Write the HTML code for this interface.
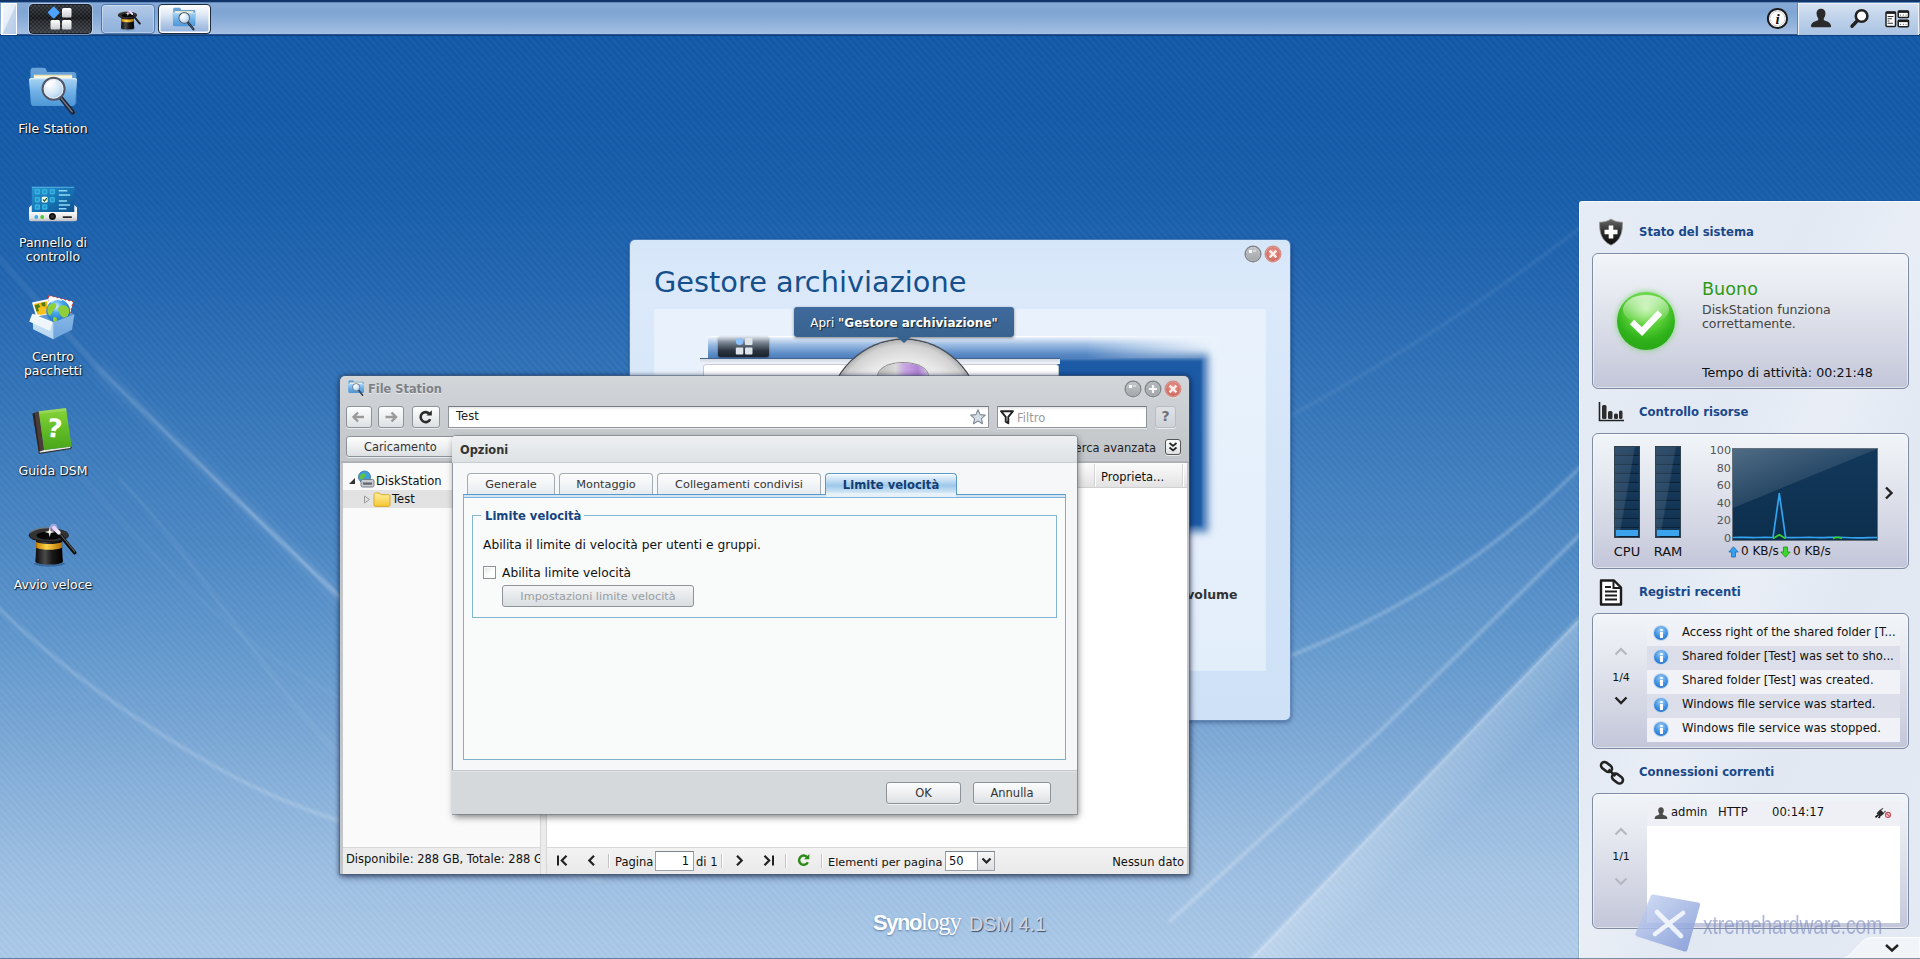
<!DOCTYPE html>
<html lang="it">
<head>
<meta charset="utf-8">
<title>Synology DiskStation - DSM 4.1</title>
<style>
*{box-sizing:border-box;margin:0;padding:0}
html,body{width:1920px;height:959px;overflow:hidden}
body{position:relative;font-family:"DejaVu Sans","Liberation Sans",sans-serif;font-size:11.5px;color:#111;
 background:#1259a7}
.abs{position:absolute}
#bg{position:absolute;left:0;top:0;width:1920px;height:959px;
 background:linear-gradient(180deg,#1158a7 0px,#135aa8 120px,#175eab 200px,#2568b2 300px,#3777ba 420px,#4b87c4 540px,#6097cd 640px,#78a6d5 730px,#8eb5dd 810px,#a0c1e4 885px,#abc9e8 959px)}
#stripes{position:absolute;left:0;top:0;width:1920px;height:959px;
 background:repeating-linear-gradient(48deg,rgba(255,255,255,0.026) 0px,rgba(255,255,255,0.026) 1.4px,rgba(0,0,0,0.014) 2.6px,rgba(0,0,0,0.014) 3.8px,rgba(255,255,255,0.026) 5.0px)}
/* ---------- taskbar ---------- */
#taskbar{position:absolute;left:0;top:0;width:1920px;height:36px;
 background:linear-gradient(180deg,#0f2f60 0px,#12386f 1.8px,#6d93c4 2.6px,#86aad7 3.4px,#7fa5d4 12px,#91b2dc 24px,#a4bfe2 33.5px,#35609b 34.3px,#0e3670 35.2px,#0f4a91 36px)}
.dlabel{position:absolute;left:-7px;width:120px;text-align:center;color:#fff;font-size:12.5px;line-height:14px;text-shadow:1px 1px 1px rgba(0,0,0,.85),0 0 2px rgba(0,0,0,.5)}
.wbtn{position:absolute;width:14px;height:14px;border-radius:50%;margin:1px}
.wbtn svg{position:absolute;left:-1px;top:-1px}
.wmin{background:linear-gradient(180deg,#c4c7ca 0%,#b4b7ba 45%,#a4a8ab 100%);box-shadow:0 0 0 1.5px #80858a,0 1px 1px 1px rgba(255,255,255,.5)}
.wmin:before{content:"";position:absolute;left:3px;top:3px;width:3px;height:3px;background:#fff;opacity:.95}
.wmin:after{content:"";position:absolute;left:7px;top:3px;width:3px;height:2px;background:#d9dbdd;opacity:.8}
.wmax{background:linear-gradient(180deg,#b5b8bb 0%,#a5a8ab 100%);box-shadow:0 0 0 1.5px #80858a,0 1px 1px 1px rgba(255,255,255,.5)}
.wclose{background:radial-gradient(circle at 50% 40%,#e9a096 0,#db7c72 5px,#cf675d 8px);box-shadow:0 0 0 1.5px #d58d85,0 1px 1px 1px rgba(255,255,255,.5)}

.tbtn{position:absolute;border:1px solid #8e9399;border-radius:3px;background:linear-gradient(180deg,#fdfdfd 0%,#eef0f1 50%,#dde0e3 100%);box-shadow:0 1px 0 rgba(255,255,255,.6)}
.tbtn svg{position:absolute;left:0;top:0}
.fld{background:linear-gradient(180deg,#e6e6e6 0,#fff 3px);border:1px solid #8f959b;border-top-color:#767c83;box-shadow:0 1px 0 rgba(255,255,255,.6);white-space:nowrap}
.psep{position:absolute;top:6px;width:1px;height:14px;background:#c4c4c4;box-shadow:1px 0 0 #fff}
.tab{position:absolute;top:37px;height:22px;border:1px solid #a3abb3;border-bottom:none;border-radius:4px 4px 0 0;background:linear-gradient(180deg,#fbfcfc 0%,#f1f4f6 55%,#e4eaf0 100%);font-size:11.300px;line-height:22px;text-align:center;color:#333;white-space:nowrap;box-shadow:inset 0 1px 0 #fff}
.tab.act{border-color:#5b9ac6;background:linear-gradient(180deg,#f4f9fd 0%,#cfe4f5 25%,#9cc8ea 55%,#c4def3 80%,#e8f2fa 100%);color:#123c72;font-weight:700;font-size:11.600px}
.wtitle{position:absolute;left:59px;font-size:11.650px;font-weight:700;line-height:16px;color:#19488a;white-space:nowrap}
.wbox{position:absolute;left:12px;width:317px;height:136px;border:1px solid #7f8ba3;border-radius:6px;background:linear-gradient(180deg,#f1f4f8 0%,#e6e9f0 30%,#d3d6e3 70%,#c3c6d9 100%);box-shadow:inset 0 0 0 1px rgba(255,255,255,.5)}
.meter{position:absolute;top:12px;width:26px;height:92px;border:1px solid #33424f;background:repeating-linear-gradient(180deg,#16395a 0,#133352 8px,#0a2238 8px,#0a2238 9px);}
.meter:before{content:"";position:absolute;left:0;top:0;width:24px;height:90px;background:linear-gradient(100deg,rgba(255,255,255,.13) 0%,rgba(255,255,255,.10) 48%,rgba(255,255,255,0) 52%)}
.meter i{position:absolute;left:1px;bottom:1px;width:22px;height:6px;background:#3aa3ec}
.ylab{left:98px;width:40px;text-align:right;font-size:11.200px;line-height:12px;color:#555}
.lrow{position:absolute;left:54px;width:253px;height:24px;font-size:11.600px;line-height:20px;color:#111;white-space:nowrap;padding-left:35px;overflow:hidden}
.inf{position:absolute;left:7px;top:4px;width:14px;height:14px;border-radius:50%;background:radial-gradient(circle at 50% 30%,#9fd0f7 0,#3a8ee0 55%,#1f6cc4 100%);box-shadow:0 0 0 1px #c5d8ee}
.inf:before{content:"";position:absolute;left:6px;top:6px;width:2.500px;height:5.500px;background:#fff}
.inf:after{content:"";position:absolute;left:5.800px;top:2.500px;width:2.800px;height:2.500px;border-radius:50%;background:#fff}
</style>
</head>
<body>
<div id="bg"></div>
<svg id="streaks" class="abs" style="left:0;top:0" width="1920" height="959" viewBox="0 0 1920 959">
 <defs><filter id="bl1" x="-5%" y="-5%" width="110%" height="110%"><feGaussianBlur stdDeviation="1.600"/></filter><linearGradient id="gL1" gradientUnits="userSpaceOnUse" x1="0" y1="250" x2="260" y2="520"><stop offset="0" stop-color="#fff" stop-opacity=".07"/><stop offset=".45" stop-color="#fff" stop-opacity=".16"/><stop offset="1" stop-color="#fff" stop-opacity=".34"/></linearGradient><filter id="bl2" x="-5%" y="-5%" width="110%" height="110%"><feGaussianBlur stdDeviation="5"/></filter></defs>
 <g fill="none" stroke="#fff" stroke-linecap="round">
  <path d="M-10 248L100 370 230 493 345 602 620 850" stroke="url(#gL1)" stroke-width="3" filter="url(#bl1)"/>
  <path d="M100 370L230 493 345 602 620 850" stroke-opacity=".07" stroke-width="12" filter="url(#bl2)"/>
  <path d="M-10 600C60 668 140 725 225 772S420 850 600 880" stroke-opacity=".22" stroke-width="3" filter="url(#bl1)"/>
  <path d="M120 480C200 560 270 690 345 760" stroke-opacity=".09" stroke-width="2.500" filter="url(#bl1)"/>
  <path d="M40 430C120 520 220 640 345 700" stroke-opacity=".06" stroke-width="2" filter="url(#bl1)"/>
  <path d="M1290 656C1400 612 1500 550 1585 462" stroke-opacity=".26" stroke-width="3" filter="url(#bl1)"/>
  <path d="M1170 921L1380 731 1585 530" stroke-opacity=".26" stroke-width="3.500" filter="url(#bl1)"/>
  <path d="M1245 965L1585 613" stroke-opacity=".22" stroke-width="4" filter="url(#bl1)"/>
  <path d="M1290 416C1400 356 1500 290 1585 224" stroke-opacity=".09" stroke-width="2.500" filter="url(#bl1)"/>
  
 </g>
 <linearGradient id="gStreak" gradientUnits="userSpaceOnUse" x1="1400" y1="804.600" x2="1436" y2="839.300"><stop offset="0" stop-color="#fff" stop-opacity=".26"/><stop offset="1" stop-color="#fff" stop-opacity=".09"/></linearGradient>
 <path d="M1245 965L1585 613V965z" fill="url(#gStreak)"/>
 <path d="M1190 908L1585 532V462C1500 550 1400 612 1290 656L1190 700z" fill="#fff" fill-opacity=".03"/>
</svg>
<div id="stripes"></div>
<div id="taskbar"></div>
<!--DESKTOP-->
<!-- taskbar items -->
<div class="abs" style="left:1px;top:3px;width:16px;height:32px;border:1px solid #fff;border-left:2px solid #fff;background:linear-gradient(115deg,#f2f6fb 0%,#e4edf8 48%,#c3d5ec 52%,#b4cbe8 100%)"></div>
<div class="abs" id="mainbtn" style="left:29px;top:4px;width:63px;height:30px;border-radius:4px;border:1px solid #1a1f28;box-shadow:0 0 0 1px rgba(255,255,255,.35);background:linear-gradient(180deg,#2c3035 0%,#121417 48%,#1e2125 54%,#363a40 100%)">
 <svg class="abs" style="left:0;top:0" width="61" height="28" viewBox="0 0 61 28">
  <defs><pattern id="chk" width="4" height="4" patternUnits="userSpaceOnUse"><rect width="2" height="2" fill="rgba(255,255,255,.10)"/><rect x="2" y="2" width="2" height="2" fill="rgba(255,255,255,.10)"/></pattern>
  <linearGradient id="sq" x1="0" y1="0" x2="0" y2="1"><stop offset="0" stop-color="#ffffff"/><stop offset="1" stop-color="#c9ccd1"/></linearGradient></defs>
  <rect width="61" height="28" fill="url(#chk)"/>
  <rect x="19.2" y="3" width="9" height="9" rx="1.2" fill="#4da3ff" transform="rotate(45 23.7 7.5)"/>
  <rect x="32" y="3" width="9.5" height="9.5" rx="1.5" fill="url(#sq)"/>
  <rect x="20.5" y="15" width="9.5" height="9.5" rx="1.5" fill="url(#sq)"/>
  <rect x="32" y="15" width="9.5" height="9.5" rx="1.5" fill="url(#sq)"/>
 </svg>
</div>
<div class="abs" style="left:101px;top:4px;width:54px;height:30px;border-radius:4px;border:1px solid #4f78ad;box-shadow:inset 0 0 0 1px rgba(255,255,255,.35);background:linear-gradient(180deg,#b4cbe8 0%,#9dbbe0 50%,#8fb0da 100%)">
 <svg class="abs" style="left:14px;top:2px" width="26" height="24" viewBox="0 0 52 48"><use href="#hat"/></svg>
</div>
<div class="abs" style="left:158px;top:4px;width:53px;height:30px;border-radius:4px;border:1px solid #1d2a40;box-shadow:inset 0 0 0 1.5px #fff;background:linear-gradient(180deg,#ffffff 0%,#dfe8f5 35%,#a9c2e3 75%,#93b2dc 100%)">
 <svg class="abs" style="left:12px;top:1px" width="26" height="26" viewBox="0 0 48 48"><use href="#fsicon"/></svg>
</div>
<!-- right tray -->
<div class="abs" style="left:1798px;top:3px;width:121px;height:32px;border-top:1px solid #eef3fa;border-left:1px solid #eef3fa;border-right:1px solid #eef3fa;box-shadow:-1px 0 0 #5f86b8;background:linear-gradient(180deg,#d6e2f2 0%,#bfd2ea 45%,#a9c3e3 100%)"></div>
<svg class="abs" style="left:1766px;top:7px" width="23" height="23" viewBox="0 0 23 23">
 <circle cx="11.5" cy="11.5" r="9.6" fill="#fff" stroke="#1c1c1c" stroke-width="2"/>
 <circle cx="11.5" cy="11.5" r="7.4" fill="none" stroke="#bfc6cf" stroke-width=".8"/>
 <text x="11.6" y="17" font-family="Liberation Serif,serif" font-style="italic" font-weight="700" font-size="15" text-anchor="middle" fill="#111">i</text>
</svg>
<svg class="abs" style="left:1810px;top:8px" width="22" height="21" viewBox="0 0 22 21">
 <path d="M11 .8c3 0 4.6 2.2 4.4 5.2-.2 2.4-1.100 3.600-1.700 4.400-.3 1.300.4 1.800 1.700 2.300 2.600 1 5.200 1.900 5.700 5.300.1.800-.3 1.200-1 1.200H1.900c-.7 0-1.100-.4-1-1.200.5-3.400 3.100-4.300 5.700-5.300 1.300-.5 2-1 1.700-2.300-.6-.8-1.500-2-1.700-4.400C6.400 3 8 .8 11 .8z" fill="#2a2a2a"/>
</svg>
<svg class="abs" style="left:1848px;top:8px" width="22" height="22" viewBox="0 0 22 22">
 <circle cx="13.600" cy="8" r="5.800" fill="#fff" stroke="#222" stroke-width="2.600"/>
 <path d="M9.300 12.700L4 18.200" stroke="#222" stroke-width="3.400" stroke-linecap="round"/>
</svg>
<svg class="abs" style="left:1885px;top:10px" width="25" height="19" viewBox="0 0 25 19">
 <rect x="1" y="2" width="9.500" height="14.500" rx="1" fill="#fff" stroke="#1c1c1c" stroke-width="1.500"/><path d="M1 2.800h9.500" stroke="#1c1c1c" stroke-width="2.200"/>
 <rect x="13.200" y="1" width="10.300" height="6.500" rx="1" fill="#fff" stroke="#1c1c1c" stroke-width="1.500"/><path d="M13.200 1.800h10.300" stroke="#1c1c1c" stroke-width="2.200"/>
 <rect x="13.200" y="10.200" width="10.300" height="6.500" rx="1" fill="#fff" stroke="#1c1c1c" stroke-width="1.500"/><path d="M13.200 11h10.300" stroke="#1c1c1c" stroke-width="2.200"/>
 <path d="M3 6.500h5M3 8.800h3.500M3 11h1M3 13.200h4.500M15.500 5h.01M18.300 5h.01M21 5h.01M15.500 14.200h.01M18.300 14.200h.01M21 14.200h.01" stroke="#333" stroke-width="1.100" stroke-linecap="round"/>
</svg>

<!-- shared icon defs -->
<svg width="0" height="0" style="position:absolute">
 <defs>
  <linearGradient id="gFold" x1="0" y1="0" x2="0" y2="1"><stop offset="0" stop-color="#a9d4f5"/><stop offset=".5" stop-color="#6fb0e6"/><stop offset="1" stop-color="#4d96d6"/></linearGradient>
  <linearGradient id="gFoldB" x1="0" y1="0" x2="0" y2="1"><stop offset="0" stop-color="#6aa5da"/><stop offset="1" stop-color="#3f82c4"/></linearGradient>
  <radialGradient id="gLens" cx=".35" cy=".3" r=".8"><stop offset="0" stop-color="#ffffff"/><stop offset=".6" stop-color="#cfe4f6"/><stop offset="1" stop-color="#8fbbe3"/></radialGradient>
  <g id="fsicon">
   <path d="M4 6c0-1.600 1-2.600 2.600-2.600h8.800c1.400 0 2.200.6 2.800 2.200l.6 1.600H42c1.800 0 2.800 1 2.800 2.800V34c0 1.800-1 2.800-2.800 2.800H6.800C5 36.800 4 35.800 4 34z" fill="url(#gFoldB)"/>
   <path d="M7 9.500h34v8H7z" fill="#fbf7dc"/>
   <path d="M7 10.200h34" stroke="#e3dcae" stroke-width=".8"/>
   <path d="M2.600 15c-.2-1.600.8-2.600 2.400-2.600h38c1.600 0 2.600 1 2.400 2.600l-2 20c-.2 1.500-1 2.400-2.600 2.400H7.200c-1.600 0-2.400-.9-2.600-2.400z" fill="url(#gFold)"/>
   <path d="M3.200 14.200c.3-.8 1-1.200 1.900-1.200h37.800c.9 0 1.600.4 1.900 1.200" stroke="#d8edfc" stroke-width="1" fill="none"/>
   <path d="M30.500 29.500L41.500 43" stroke="#1c2433" stroke-width="4" stroke-linecap="round"/>
   <path d="M30.500 29.500L41 42.500" stroke="#6a7485" stroke-width="1.400" stroke-linecap="round"/>
   <circle cx="24.500" cy="22" r="9.600" fill="url(#gLens)" stroke="#4e5668" stroke-width="2.200"/>
   <circle cx="24.500" cy="22" r="8.400" fill="none" stroke="#e9eef5" stroke-width="1"/>
   <path d="M18.500 20.500a6.500 6.500 0 0 1 8-4.800" stroke="#fff" stroke-width="1.600" fill="none" opacity=".9"/>
  </g>
  <linearGradient id="gHat" x1="0" y1="0" x2="1" y2="0"><stop offset="0" stop-color="#0b0b0b"/><stop offset=".35" stop-color="#4a4a4a"/><stop offset=".6" stop-color="#1a1a1a"/><stop offset="1" stop-color="#000"/></linearGradient>
  <linearGradient id="gBand" x1="0" y1="0" x2="1" y2="0"><stop offset="0" stop-color="#c77f00"/><stop offset=".4" stop-color="#ffd24a"/><stop offset="1" stop-color="#b36b00"/></linearGradient>
  <g id="hat">
   <ellipse cx="23.500" cy="44" rx="15" ry="2.800" fill="rgba(0,20,60,.28)"/>
   <path d="M10.600 21C11 28 10.500 36 10 41.500c0 4.400 26.500 4.400 26.500 0C36 36 35.500 28 35.900 21z" fill="url(#gHat)"/>
   <path d="M10.700 23c6 2.600 19 2.600 25.100 0l-.2 5.600c-6 2.600-18.800 2.600-24.800 0z" fill="url(#gBand)"/>
   <ellipse cx="22.900" cy="16.500" rx="19.200" ry="6.800" fill="#1b1b1b"/>
   <ellipse cx="22.900" cy="16" rx="18.600" ry="6.200" fill="#333"/>
   <ellipse cx="23.200" cy="16.800" rx="12.200" ry="3.900" fill="#070707"/>
   <path d="M5 14c4-3.500 11-4.700 18-4.700" stroke="#777" stroke-width="1" fill="none"/>
   <path d="M29 10.500L47.800 33.300" stroke="#0c0c0c" stroke-width="3.600" stroke-linecap="round"/>
   <path d="M29.600 10.200L48 32.600" stroke="#5d5d5d" stroke-width="1" stroke-linecap="round"/>
   <path d="M28 9.500L32.500 14" stroke="#f1e6fb" stroke-width="3.800" stroke-linecap="round"/>
   <circle cx="27.500" cy="9" r="3.600" fill="#e5c4ff" opacity=".5"/>
   <path d="M23.800 8.500l1 3.900 3.900 1-3.900 1-1 3.900-1-3.900-3.900-1 3.900-1z" fill="#fff" opacity=".95"/>
  </g>
 </defs>
</svg>

<!-- desktop icons -->
<svg class="abs" style="left:26px;top:64px" width="54" height="54" viewBox="0 0 48 48"><use href="#fsicon"/></svg>
<div class="dlabel" style="top:122px">File Station</div>

<svg class="abs" style="left:28px;top:183px" width="50" height="40" viewBox="0 0 50 40">
 <defs><linearGradient id="gScr" x1="0" y1="0" x2="1" y2="1"><stop offset="0" stop-color="#2a95d2"/><stop offset=".45" stop-color="#1878b8"/><stop offset="1" stop-color="#0c4f8a"/></linearGradient>
 <linearGradient id="gBase" x1="0" y1="0" x2="0" y2="1"><stop offset="0" stop-color="#fbfbfb"/><stop offset=".6" stop-color="#e4e4e6"/><stop offset="1" stop-color="#bcbcc2"/></linearGradient></defs>
 <path d="M3.800 3.700h42.500v26H3.800z" fill="url(#gScr)"/>
 <path d="M3.800 3.700h42.500v1.200H3.800z" fill="#6cc4f0" opacity=".55"/>
 <g fill="#35b1df"><rect x="6.700" y="6" width="5.400" height="5.400" rx="1.300"/><rect x="14" y="6" width="5.400" height="5.400" rx="1.300"/><rect x="21.600" y="6" width="5.400" height="5.400" rx="1.300"/><rect x="6.700" y="14" width="5.400" height="5.400" rx="1.300"/><rect x="21.600" y="14" width="5.400" height="5.400" rx="1.300"/><rect x="6.700" y="21.300" width="5.400" height="5.400" rx="1.300"/><rect x="14" y="21.300" width="5.400" height="5.400" rx="1.300"/></g>
 <g fill="#1c86c2" opacity=".7"><rect x="8.200" y="7.500" width="2.400" height="2.400"/><rect x="15.500" y="7.500" width="2.400" height="2.400"/><rect x="23.100" y="7.500" width="2.400" height="2.400"/><rect x="8.200" y="15.500" width="2.400" height="2.400"/><rect x="23.100" y="15.500" width="2.400" height="2.400"/><rect x="8.200" y="22.800" width="2.400" height="2.400"/><rect x="15.500" y="22.800" width="2.400" height="2.400"/></g>
 <rect x="13.800" y="13.800" width="5.800" height="5.800" rx="1.300" fill="#f2fbf4"/><path d="M15 16.500l1.500 1.600 2.300-3" stroke="#14632a" stroke-width="1.300" fill="none"/>
 <path d="M30.800 7.800h8.500M30.800 11.900h11.400M30.800 18h8.200M30.800 22h11.200M30.800 25.700h7.600" stroke="#9de3ff" stroke-width="1.500" opacity=".9"/>
 <path d="M1 24.500l2.800-2.500v8H1z" fill="#eef1f4"/><path d="M49 24.500l-2.700-2.500v8H49z" fill="#eef1f4"/>
 <path d="M1 30.200c0-.8.500-1.200 1.300-1.200h45.400c.8 0 1.300.4 1.300 1.200v6c0 1.300-.8 2-2.200 2H3.200C1.800 38.200 1 37.500 1 36.200z" fill="url(#gBase)"/>
 <circle cx="8.300" cy="34" r="1.900" fill="#3aaee9"/><circle cx="14.200" cy="34" r="1.900" fill="#4fc62f"/>
 <circle cx="24.400" cy="33.300" r="4" fill="#fff"/><circle cx="24.400" cy="33.400" r="3.500" fill="#0e0e0e"/><circle cx="24.400" cy="33.400" r="1.900" fill="#2e2e2e"/>
 <rect x="34.800" y="33.300" width="9" height="1.700" fill="#222"/>
</svg>
<div class="dlabel" style="top:236px">Pannello di<br>controllo</div>

<svg class="abs" style="left:27px;top:292px" width="50" height="50" viewBox="0 0 50 50">
 <defs><radialGradient id="gGlobe" cx=".42" cy=".3" r=".75"><stop offset="0" stop-color="#d6f3ff"/><stop offset=".35" stop-color="#4aa9ea"/><stop offset="1" stop-color="#1565b8"/></radialGradient>
 <linearGradient id="gBoxL" x1="0" y1="0" x2="0" y2="1"><stop offset="0" stop-color="#cfe5f7"/><stop offset="1" stop-color="#b4d6f1"/></linearGradient>
 <linearGradient id="gBoxR" x1="0" y1="0" x2="0" y2="1"><stop offset="0" stop-color="#86b7e6"/><stop offset="1" stop-color="#6ea3dc"/></linearGradient></defs>
 <path d="M21.800 3.400l24.400 6.200-3 12-23-5z" fill="#fff" stroke="#d8303a" stroke-width="1.300" stroke-dasharray="1.800 2.200"/>
 <path d="M22.500 4.800l22.300 5.700-2.400 9.800-21.200-4.600z" fill="#fdfdfd"/>
 <path d="M5.500 22.200L26 14l21.400 8.200-21.200 8.100z" fill="#5f97d3"/>
 <path d="M5 10.600l16.400-3.600 1.500 15-13.800 2.600z" fill="#fff"/>
 <path d="M7 12l13-2.800 1.100 11.600-10.600 2z" fill="#f2b611"/><path d="M7.500 13.500l4-1.500 2.500 3.500-1 3.500-3.500.5zM14 11l4-1 .5 4-3 1z" fill="#4f7d16"/><path d="M11 16l5-2 4 4-1 4-6 1z" fill="#f8c21a"/>
 <circle cx="31.200" cy="19.200" r="11.900" fill="url(#gGlobe)"/>
 <path d="M21.500 14c2.500-3 6-3.500 7.500-1.500s-1 4-2.500 5.500-1.500 5-3.500 5.500-3.500-6-1.500-9.500zM32 15c2.500-2.500 7-2 9 .5s1.500 7-1 9-5 1-6.500-1.500-3.500-6-1.500-8zM26.500 25.500c1.500-1 3.500 0 3.500 2s-2 3.500-3 2.500-1.500-3.500-.5-4.500z" fill="#8fcf3a"/>
 <path d="M24 10.500a9.500 9.500 0 0 1 11-2" stroke="#fff" stroke-width="1.600" fill="none" opacity=".75"/>
 <path d="M5.500 22.200l20.700 8.100v16.900L6.100 37.200z" fill="url(#gBoxL)"/>
 <path d="M26.200 30.300l21.200-8.100-2.400 15.600-18.800 9.400z" fill="url(#gBoxR)"/>
 <path d="M2.700 29.700l2.800-7.500 20 8.100-2.500 8.700z" fill="#eef6fc"/>
 <path d="M2.700 29.700l2.800-7.500 20 8.100" stroke="#fff" stroke-width=".8" fill="none"/>
 <path d="M26.200 30.300v16.900" stroke="#a9cdee" stroke-width=".8"/>
</svg>
<div class="dlabel" style="top:350px">Centro<br>pacchetti</div>

<svg class="abs" style="left:30px;top:406px" width="46" height="50" viewBox="0 0 46 50">
 <defs><linearGradient id="gBook" x1="0" y1="0" x2="0" y2="1"><stop offset="0" stop-color="#8ad43a"/><stop offset=".5" stop-color="#62bd27"/><stop offset="1" stop-color="#4aa51a"/></linearGradient></defs>
 <path d="M2.600 7.400l6.200-2.200 5.300 38.800-5.300 2z" fill="#4a3c37"/>
 <path d="M2.600 7.400l2-.7 5.300 38.700-1.100.5z" fill="#2b2322"/>
 <path d="M8.800 45.900l5.300-1.900 27.500-3.400-1.300 1.900-30.800 4.800z" fill="#e6e6e6"/>
 <path d="M8.800 46.200l.9 1.200 30.700-4.900 1.300-1.900" stroke="#2e2e2e" stroke-width="1.200" fill="none"/>
 <path d="M8.800 5.250L36 2.100l5.600 38.500L14.100 44z" fill="url(#gBook)"/>
 <path d="M8.800 5.250L36 2.100l.4 2.700L9.200 8z" fill="#fff" opacity=".16"/>
 <text x="24.600" y="31.500" font-family="DejaVu Sans,sans-serif" font-weight="700" font-size="26" text-anchor="middle" fill="#fdfff8" transform="rotate(7 24 22)">?</text>
</svg>
<div class="dlabel" style="top:464px">Guida DSM</div>

<svg class="abs" style="left:25px;top:518px" width="54" height="50" viewBox="0 0 52 48"><use href="#hat"/></svg>
<div class="dlabel" style="top:578px">Avvio veloce</div>

<!--/DESKTOP-->
<!--STORAGE-->
<div class="abs" id="stwin" style="left:630px;top:240px;width:660px;height:480px;border-radius:5px;background:linear-gradient(180deg,#d6e6f9 0%,#dbe9fa 12%,#d2e3f7 60%,#cfe1f7 100%);box-shadow:0 0 0 1px rgba(110,150,200,.55),1px 2px 5px rgba(0,20,60,.45);overflow:hidden">
 <div class="abs" style="left:24px;top:23.500px;font-size:28.800px;line-height:36px;color:#15508d;white-space:nowrap">Gestore archiviazione</div>
 <!-- inner panel -->
 <div class="abs" style="left:25px;top:70px;width:610px;height:360px;background:linear-gradient(180deg,#e9f2fc 0%,#e3eefb 100%);box-shadow:0 0 0 1px rgba(255,255,255,.35)"></div>
 <!-- screenshot picture -->
 <div class="abs" style="left:92px;top:120px;width:480px;height:166px;background:#1c5aa5;box-shadow:0 0 7px 6px rgba(28,90,165,.8);filter:blur(1.2px)"></div>
 <div class="abs" style="left:76px;top:96px;width:520px;height:22px;background:linear-gradient(90deg,rgba(255,255,255,0) 0,#fff 8px,#fff 60%,rgba(255,255,255,0) 100%)"></div>
 <div class="abs" style="left:78px;top:97px;width:505px;height:21px;background:linear-gradient(180deg,#eaf1fa 0%,#9dbde3 35%,#5b8bc6 80%,#4d7ebc 100%);-webkit-mask-image:linear-gradient(90deg,#000 0,#000 75%,transparent 100%);mask-image:linear-gradient(90deg,#000 0,#000 75%,transparent 100%)"></div>
 <div class="abs" style="left:88px;top:96px;width:51px;height:21px;border-radius:2px;background:linear-gradient(180deg,#e8edf4 0%,#7c8896 30%,#2b3440 70%,#1b222c 100%);box-shadow:0 1px 2px rgba(0,0,0,.4)">
   <svg class="abs" style="left:16px;top:1px" width="22" height="19" viewBox="0 0 22 19"><circle cx="5.500" cy="4.500" r="3.600" fill="#8ec2ff"/><rect x="11" y="1" width="7.500" height="7" rx="1" fill="#dfe4ea"/><rect x="1.800" y="10.500" width="7.500" height="7" rx="1" fill="#dfe4ea"/><rect x="11" y="10.500" width="7.500" height="7" rx="1" fill="#dfe4ea"/></svg>
 </div>
 <div class="abs" style="left:70px;top:118px;width:360px;height:1px;background:#44638c"></div>
 <div class="abs" style="left:70px;top:119px;width:360px;height:5px;background:linear-gradient(180deg,#cfd8e4,#f4f6f9)"></div>
 <div class="abs" style="left:73px;top:124px;width:356px;height:14px;background:#fff;border:1px solid #c2cad6;border-radius:3px 3px 0 0"></div>
 <!-- disc -->
 <div class="abs" style="left:199px;top:100px;width:150px;height:150px;border-radius:50%;background:radial-gradient(circle at 50% 50%,#c9a7e6 0,#b48ad9 14px,#d8d8d8 15px,#bfbfbf 27px,#8f8f8f 28px,#f2f2f2 30px,#e9e9e9 55px,#d2d2d2 70px,#b9b9b9 74px);box-shadow:0 0 0 1.500px #4c4f55"></div>
 <div class="abs" style="left:248px;top:123px;width:50px;height:26px;border-radius:50%;background:linear-gradient(90deg,#b9b9b9 0%,#d9d9d9 35%,#c6a2e2 55%,#b184d6 80%,#d6c2e8 100%);box-shadow:0 0 0 1px #8c8c8c"></div>
 <!-- tooltip -->
 <div class="abs" style="left:164px;top:67px;width:220px;height:30px;border-radius:3px;background:linear-gradient(180deg,#3f6a9c 0%,#38628f 100%);box-shadow:0 1px 3px rgba(0,0,0,.45);color:#fff;font-size:12px;line-height:33px;text-align:center;white-space:nowrap;text-shadow:1px 1px 1px rgba(0,0,0,.7)">Apri <b>"Gestore archiviazione"</b></div>
 <svg class="abs" style="left:264px;top:97px" width="20" height="7" viewBox="0 0 20 7"><path d="M3 0h14l-7 6z" fill="#38628f"/></svg>
 <div class="abs" style="left:534px;top:347px;font-size:12.500px;font-weight:700;color:#333;white-space:nowrap">un volume</div>
 <!-- window buttons -->
 <div class="wbtn wmin" style="left:615px;top:6px"></div>
 <div class="wbtn wclose" style="left:635px;top:6px"><svg width="16" height="16" viewBox="0 0 16 16"><path d="M4.600 4.600l6.800 6.800M11.400 4.600l-6.800 6.800" stroke="#fdeeeb" stroke-width="2.300" stroke-linecap="butt"/></svg></div>
</div>

<!--/STORAGE-->
<!--FILESTATION-->
<div class="abs" id="fswin" style="left:340px;top:376px;width:849px;height:498px;border-radius:5px 5px 0 0;background:linear-gradient(180deg,#d3d6d9 0px,#cdd0d4 26px,#c6cacd 60px,#c2c6ca 86px);box-shadow:0 0 0 1px rgba(80,95,115,.5),0 0 4px 1px rgba(0,15,50,.42),1px 3px 7px rgba(0,10,40,.5)">
<div class="abs" style="left:1px;top:0;width:848px;height:498px">
 <!-- title -->
 <svg class="abs" style="left:6px;top:3px" width="18" height="18" viewBox="0 0 48 48"><use href="#fsicon"/></svg>
 <div class="abs" style="left:27px;top:6px;font-size:11.400px;font-weight:700;color:#7d8186;line-height:15px;white-space:nowrap;text-shadow:0 1px 0 rgba(255,255,255,.5)">File Station</div>
 <div class="wbtn wmin" style="left:784px;top:5px"></div>
 <div class="wbtn wmax" style="left:804px;top:5px"><svg width="16" height="16" viewBox="0 0 16 16"><path d="M8 4v8M4 8h8" stroke="#f7f7f7" stroke-width="2.200"/></svg></div>
 <div class="wbtn wclose" style="left:824px;top:5px"><svg width="16" height="16" viewBox="0 0 16 16"><path d="M4.600 4.600l6.800 6.800M11.400 4.600l-6.800 6.800" stroke="#fdeeeb" stroke-width="2.300" stroke-linecap="butt"/></svg></div>
 <!-- toolbar 1 -->
 <div class="tbtn" style="left:5px;top:30px;width:26px;height:22px"><svg width="23" height="20" viewBox="0 0 23 20"><path d="M17 10H7M11 5.500L6.500 10l4.500 4.500" stroke="#9a9a9a" stroke-width="2.400" fill="none"/></svg></div>
 <div class="tbtn" style="left:37px;top:30px;width:26px;height:22px"><svg width="24" height="20" viewBox="0 0 24 20"><path d="M6.500 10h10M12.500 5.500L17 10l-4.500 4.500" stroke="#9a9a9a" stroke-width="2.400" fill="none"/></svg></div>
 <div class="tbtn" style="left:71px;top:30px;width:28px;height:22px"><svg width="26" height="20" viewBox="0 0 26 20"><path d="M17.200 12.200a5 5 0 1 1-.6-5.200" stroke="#2b2b2b" stroke-width="2.600" fill="none"/><path d="M18.800 3.200v5.400h-5.400z" fill="#2b2b2b"/></svg></div>
 <div class="abs fld" style="left:107px;top:30px;width:541px;height:22px;padding-left:7px;line-height:19px;font-size:11.500px;color:#222">Test
  <svg class="abs" style="right:1px;top:1px" width="18" height="18" viewBox="0 0 18 18"><path d="M9 1.800l2.100 4.800 5.200.5-3.900 3.500 1.100 5.100L9 13.100l-4.500 2.600 1.100-5.100L1.700 7.100l5.200-.5z" fill="#d4dde6" stroke="#7f8a96" stroke-width="1.100" stroke-linejoin="round"/></svg>
 </div>
 <div class="abs fld" style="left:656px;top:30px;width:150px;height:22px;padding-left:19px;line-height:22px;font-size:11.500px;color:#9a9a9a">Filtro
  <svg class="abs" style="left:2px;top:3px" width="14" height="15" viewBox="0 0 14 15"><path d="M1 1.200h12L8.300 6.800v6.400L5.700 11.600V6.800z" fill="none" stroke="#222" stroke-width="1.900" stroke-linejoin="round"/></svg>
 </div>
 <div class="tbtn" style="left:814px;top:30px;width:21px;height:22px;background:linear-gradient(180deg,#dfe2e5,#cfd3d7);border-color:#b9bdc2;font-weight:700;font-size:14px;line-height:19px;text-align:center;color:#6d7177">?</div>
 <!-- toolbar 2 -->
 <div class="tbtn" style="left:5px;top:60px;width:119px;height:21px;font-size:11.400px;line-height:20px;padding-left:17px;color:#333">Caricamento</div>
 <div class="abs" style="left:660px;top:65px;width:155px;text-align:right;font-size:11.500px;line-height:15px;color:#222;white-space:nowrap">Ricerca avanzata</div>
 <div class="tbtn" style="left:824px;top:63px;width:16px;height:16px;border-radius:3px;border-color:#555"><svg width="14" height="14" viewBox="0 0 14 14"><path d="M3.500 3l3.500 3 3.500-3M3.500 7.500l3.500 3 3.500-3" stroke="#222" stroke-width="1.700" fill="none"/></svg></div>
 <div class="abs" style="left:0;top:85px;width:848px;height:2px;background:linear-gradient(180deg,#b3b7bb,#a9adb1)"></div>
 <!-- tree -->
 <div class="abs" style="left:2px;top:87px;width:197px;height:384px;background:#fafafa">
  <svg class="abs" style="left:5px;top:14px" width="8" height="8" viewBox="0 0 8 8"><path d="M7 1v6H1z" fill="#333"/></svg>
  <svg class="abs" style="left:14px;top:7px" width="18" height="18" viewBox="0 0 18 18"><circle cx="7.500" cy="7" r="6" fill="#3f9fd8" stroke="#2a6fa5" stroke-width=".8"/><path d="M3.500 5c1.500-2 4-2 5-.5s-1 2.500-2 3.500-2 2-3 1-1-3 0-4z" fill="#63c241"/><rect x="4" y="9.500" width="13" height="7.500" rx="1.500" fill="#c9cdd2" stroke="#6f767e" stroke-width=".9"/><rect x="6" y="12.500" width="9" height="2.200" fill="#5d646c"/></svg>
  <div class="abs" style="left:33px;top:11px;font-size:11.500px;line-height:15px;color:#111">DiskStation</div>
  <div class="abs" style="left:0;top:27px;width:197px;height:18px;background:#e2e2e2"></div>
  <svg class="abs" style="left:20px;top:32px" width="8" height="9" viewBox="0 0 8 9"><path d="M1.500 1l5 3.500-5 3.500z" fill="none" stroke="#9a9a9a" stroke-width="1"/></svg>
  <svg class="abs" style="left:30px;top:28px" width="18" height="16" viewBox="0 0 18 16"><defs><linearGradient id="gYf" x1="0" y1="0" x2="0" y2="1"><stop offset="0" stop-color="#fff0a0"/><stop offset="1" stop-color="#f4c531"/></linearGradient></defs><path d="M1 3.500C1 2.700 1.500 2 2.400 2h4l1.400 1.600h7.800c.8 0 1.400.6 1.400 1.400V14c0 .8-.6 1.400-1.400 1.400H2.400C1.600 15.400 1 14.800 1 14z" fill="url(#gYf)" stroke="#d9a520" stroke-width=".9"/></svg>
  <div class="abs" style="left:49px;top:29px;font-size:11.500px;line-height:15px;color:#111">Test</div>
 </div>
 <!-- splitter -->
 <div class="abs" style="left:199px;top:87px;width:7px;height:411px;background:#ebebeb;border-left:1px solid #d6d6d6;border-right:1px solid #d6d6d6"></div>
 <!-- grid -->
 <div class="abs" style="left:206px;top:87px;width:640px;height:384px;background:#fff">
  <div class="abs" style="left:0;top:0;width:640px;height:25px;background:linear-gradient(180deg,#fbfbfb 0%,#ededed 60%,#e2e2e2 100%);border-bottom:1px solid #d0d0d0"></div>
  <div class="abs" style="left:547px;top:1px;width:1px;height:23px;background:#d2d2d2;box-shadow:1px 0 0 #fff"></div>
  <div class="abs" style="left:635px;top:1px;width:1px;height:23px;background:#d2d2d2;box-shadow:1px 0 0 #fff"></div>
  <div class="abs" style="left:554px;top:7px;font-size:11.500px;line-height:15px;color:#111;white-space:nowrap">Proprieta...</div>
 </div>
 <!-- status / paging -->
 <div class="abs" style="left:2px;top:471px;width:197px;height:27px;background:#ececec;border-top:1px solid #d9d9d9;font-size:11.500px;line-height:23px;padding-left:3px;white-space:nowrap;overflow:hidden;color:#111">Disponibile: 288 GB, Totale: 288 GB</div>
 <div class="abs" style="left:206px;top:471px;width:640px;height:27px;background:linear-gradient(180deg,#f3f3f3,#e9e9e9);border-top:1px solid #d9d9d9;font-size:11.500px;color:#111" id="pager">
  <svg class="abs" style="left:9px;top:6px" width="13" height="13" viewBox="0 0 13 13"><path d="M2 1.500v10" stroke="#222" stroke-width="2"/><path d="M10.500 1.800L5.800 6.500l4.700 4.700" stroke="#222" stroke-width="2.200" fill="none"/></svg>
  <svg class="abs" style="left:39px;top:6px" width="11" height="13" viewBox="0 0 11 13"><path d="M8 1.800L3.300 6.500 8 11.200" stroke="#222" stroke-width="2.200" fill="none"/></svg>
  <div class="psep" style="left:61px"></div>
  <div class="abs" style="left:68px;top:7px;line-height:15px">Pagina</div>
  <div class="abs" style="left:108px;top:3px;width:39px;height:20px;background:#fff;border:1px solid #9aa0a6;border-top-color:#7c838a;text-align:right;padding-right:4px;line-height:19px">1</div>
  <div class="abs" style="left:149px;top:7px;line-height:15px">di 1</div>
  <div class="psep" style="left:174px"></div>
  <svg class="abs" style="left:187px;top:6px" width="11" height="13" viewBox="0 0 11 13"><path d="M3 1.800l4.700 4.700L3 11.200" stroke="#222" stroke-width="2.200" fill="none"/></svg>
  <svg class="abs" style="left:215px;top:6px" width="13" height="13" viewBox="0 0 13 13"><path d="M11 1.500v10" stroke="#222" stroke-width="2"/><path d="M2.500 1.800l4.700 4.700-4.700 4.700" stroke="#222" stroke-width="2.200" fill="none"/></svg>
  <div class="psep" style="left:238px"></div>
  <svg class="abs" style="left:249px;top:5px" width="15" height="15" viewBox="0 0 15 15"><path d="M11.800 9.200a4.600 4.600 0 1 1-.5-4.800" stroke="#2c8a17" stroke-width="2.500" fill="none"/><path d="M13.300 1v5.200H8.100z" fill="#2c8a17"/></svg>
  <div class="psep" style="left:274px"></div>
  <div class="abs" style="left:281px;top:7px;line-height:15px;white-space:nowrap;font-size:11.300px">Elementi per pagina</div>
  <div class="abs" style="left:398px;top:3px;width:50px;height:20px;background:#fff;border:1px solid #9aa0a6;border-top-color:#7c838a;padding-left:3px;line-height:18px">50
   <div class="abs" style="right:0;top:0;width:17px;height:18px;border-left:1px solid #9aa0a6;background:linear-gradient(180deg,#f7f7f7,#dcdfe2)"><svg class="abs" style="left:3px;top:4px" width="11" height="10" viewBox="0 0 11 10"><path d="M1.500 2.500l4 4 4-4" stroke="#222" stroke-width="2.200" fill="none"/></svg></div>
  </div>
  <div class="abs" style="right:3px;top:7px;line-height:15px;white-space:nowrap">Nessun dato</div>
 </div>
</div>
</div>
<!--/FILESTATION-->
<!--OPTIONS-->
<div class="abs" id="optdlg" style="left:453px;top:436px;width:624px;height:378px;border-radius:3px 3px 0 0;background:#f5f7f8;box-shadow:0 0 0 1px rgba(120,128,138,.7),1px 3px 7px rgba(0,0,0,.5)">
<div class="abs" style="left:-1px;top:0;width:625px;height:378px">
 <div class="abs" style="left:0;top:0;width:625px;height:27px;border-radius:3px 3px 0 0;background:linear-gradient(180deg,#eef0f2 0%,#e6e9ec 50%,#dde1e4 100%);border-bottom:1px solid #c9cdd1"></div>
 <div class="abs" style="left:8px;top:7px;font-size:11.400px;font-weight:700;color:#333;line-height:15px">Opzioni</div>
 <!-- tabs -->
 <div class="tab" style="left:15px;width:88px">Generale</div>
 <div class="tab" style="left:107px;width:94px">Montaggio</div>
 <div class="tab" style="left:205px;width:164px">Collegamenti condivisi</div>
 <div class="tab act" style="left:373px;width:132px">Limite velocità</div>
 <!-- tab panel -->
 <div class="abs" style="left:11px;top:58px;width:603px;height:266px;background:#f9fafa;border:1px solid #7fb0cc;border-top:1px solid #5b9ac6;box-shadow:inset 0 2px 0 #d3e6f5,inset 0 3px 0 #7fb3d9"></div>
 <div class="abs" style="left:374px;top:57px;width:130px;height:4px;background:#e6f1fa"></div>
 <!-- fieldset -->
 <div class="abs" style="left:20px;top:79px;width:585px;height:103px;border:1px solid #84b6d3"></div>
 <div class="abs" style="left:29px;top:72px;padding:0 3px 0 4px;background:#f9fafa;font-size:11.600px;font-weight:700;color:#15457f;line-height:16px;white-space:nowrap">Limite velocità</div>
 <div class="abs" style="left:31px;top:101px;font-size:12.250px;line-height:16px;color:#111;white-space:nowrap">Abilita il limite di velocità per utenti e gruppi.</div>
 <div class="abs" style="left:31px;top:130px;width:13px;height:13px;border:1px solid #8a9199;background:linear-gradient(135deg,#dfe3e6 0%,#fff 60%);box-shadow:inset 0 0 0 1px #fff"></div>
 <div class="abs" style="left:50px;top:129px;font-size:12.250px;line-height:16px;color:#111;white-space:nowrap">Abilita limite velocità</div>
 <div class="abs" style="left:50px;top:149px;width:192px;height:22px;border:1px solid #8e9399;border-radius:3px;background:linear-gradient(180deg,#f4f5f6 0%,#e6e9eb 50%,#dadee1 100%);font-size:11.300px;line-height:21px;text-align:center;color:#9a9ea3;white-space:nowrap">Impostazioni limite velocità</div>
 <!-- footer -->
 <div class="abs" style="left:0;top:334px;width:625px;height:44px;background:#d5d9dc;border-top:1px solid #c3c7cb;box-shadow:inset 0 1px 0 #e2e5e8"></div>
 <div class="tbtn" style="left:434px;top:346px;width:75px;height:22px;font-size:11.500px;line-height:21px;text-align:center;color:#333">OK</div>
 <div class="tbtn" style="left:521px;top:346px;width:78px;height:22px;font-size:11.500px;line-height:21px;text-align:center;color:#333">Annulla</div>
</div>
</div>
<!--/OPTIONS-->
<!--WIDGETS-->
<div class="abs" id="wpanel" style="left:1579px;top:201px;width:341px;height:758px;border-radius:3px 0 0 0;border-left:1px solid #f6f9fc;border-top:1px solid #f6f9fc;background:linear-gradient(115deg,#e6ecf5 0%,#e2e9f3 35%,#e9eef6 50%,#e1e8f2 65%,#e4eaf4 100%);box-shadow:-1px 0 0 rgba(20,60,120,.18),0 -1px 0 rgba(20,60,120,.18)">
 <!-- section headers -->
 <svg class="abs" style="left:18px;top:16px" width="26" height="28" viewBox="0 0 26 28"><defs><linearGradient id="gSh" x1="0" y1="0" x2="0" y2="1"><stop offset="0" stop-color="#6a6a6a"/><stop offset=".5" stop-color="#2a2a2a"/><stop offset="1" stop-color="#0c0c0c"/></linearGradient></defs><path d="M13 1C9.500 3.500 5 4.200 1.500 4.200c0 9 1 18 11.500 23 10.500-5 11.500-14 11.500-23C21 4.200 16.500 3.500 13 1z" fill="url(#gSh)" stroke="#9a9a9a" stroke-width=".8"/><path d="M10.700 7.500h4.600v4.200h4.200v4.600h-4.200v4.200h-4.600v-4.200H6.500v-4.600h4.200z" fill="#fff"/></svg>
 <div class="wtitle" style="top:22px">Stato del sistema</div>
 <svg class="abs" style="left:18px;top:200px" width="26" height="20" viewBox="0 0 26 20"><path d="M1.500 0v18.500H26" stroke="#222" stroke-width="1.600" fill="none"/><rect x="4" y="3" width="4.500" height="14" rx="1.500" fill="#2d2d2d"/><rect x="10" y="9" width="4.500" height="8" rx="1.500" fill="#2d2d2d"/><rect x="16" y="11.500" width="4" height="5.500" rx="1.500" fill="#2d2d2d"/><rect x="21" y="8.500" width="3.500" height="8.500" rx="1.500" fill="#2d2d2d"/></svg>
 <div class="wtitle" style="top:202px">Controllo risorse</div>
 <svg class="abs" style="left:19px;top:377px" width="24" height="27" viewBox="0 0 24 27"><path d="M2 1.500h13l7 7V25.500H2z" fill="#fff" stroke="#1c1c1c" stroke-width="2.400" stroke-linejoin="round"/><path d="M14.500 1.500v7.500H22" fill="none" stroke="#1c1c1c" stroke-width="2"/><path d="M6 8h6M6 12.500h12M6 16.500h12M6 20.500h12" stroke="#1c1c1c" stroke-width="2"/></svg>
 <div class="wtitle" style="top:382px">Registri recenti</div>
 <svg class="abs" style="left:18px;top:558px" width="28" height="26" viewBox="0 0 28 26"><g fill="none" stroke="#222" stroke-width="2.600"><rect x="2.500" y="3.500" width="12" height="7" rx="3.500" transform="rotate(38 8.500 7)"/><rect x="13.500" y="15" width="12" height="7" rx="3.500" transform="rotate(38 19.500 18.500)"/></g><path d="M10.500 9.500l7 6.500" stroke="#222" stroke-width="2.400"/></svg>
 <div class="wtitle" style="top:562px">Connessioni correnti</div>

 <!-- box 1: system health -->
 <div class="wbox" style="top:51px">
  <div class="abs" style="left:24px;top:38px;width:58px;height:58px;border-radius:50%;background:radial-gradient(circle at 50% 28%,#b5f09a 0,#5fd23c 35%,#2fb21a 62%,#22a012 100%);box-shadow:0 0 5px 1px rgba(80,210,60,.5)"></div>
  <div class="abs" style="left:30px;top:41px;width:46px;height:29px;border-radius:50%;background:linear-gradient(180deg,rgba(255,255,255,.65),rgba(255,255,255,0))"></div>
  <svg class="abs" style="left:23px;top:37px" width="60" height="60" viewBox="0 0 60 60"><path d="M16 31l10 9.500L44 21.500" stroke="#fff" stroke-width="6.200" fill="none"/></svg>
  <div class="abs" style="left:109px;top:25px;font-size:17.600px;line-height:20px;color:#2c9a1a">Buono</div>
  <div class="abs" style="left:109px;top:49px;font-size:12.500px;line-height:14.200px;color:#444;white-space:nowrap">DiskStation funziona<br>correttamente.</div>
  <div class="abs" style="left:109px;top:111px;font-size:12.650px;line-height:15px;color:#111;white-space:nowrap">Tempo di attività: 00:21:48</div>
 </div>

 <!-- box 2: resource monitor -->
 <div class="wbox" style="top:231px">
  <div class="meter" style="left:21px"><i></i></div>
  <div class="meter" style="left:62px"><i></i></div>
  <div class="abs" style="left:21px;top:109px;width:26px;text-align:center;font-size:13px;line-height:17px;color:#111;margin-left:-10px;width:46px">CPU</div>
  <div class="abs" style="left:62px;top:109px;width:26px;text-align:center;font-size:13px;line-height:17px;color:#111;margin-left:-10px;width:46px">RAM</div>
  <div class="abs ylab" style="top:11px">100</div><div class="abs ylab" style="top:29px">80</div><div class="abs ylab" style="top:46px">60</div><div class="abs ylab" style="top:64px">40</div><div class="abs ylab" style="top:81px">20</div><div class="abs ylab" style="top:99px">0</div>
  <div class="abs" style="left:139px;top:14px;width:146px;height:93px;border:1px solid #66707c;background:linear-gradient(180deg,#12385a 0%,#0d2f4e 100%)"></div>
  <svg class="abs" style="left:140px;top:15px" width="144" height="91" viewBox="0 0 144 91"><defs><linearGradient id="gGl" x1="0" y1="0" x2="1" y2="1"><stop offset="0" stop-color="#fff" stop-opacity=".26"/><stop offset=".5" stop-color="#fff" stop-opacity=".10"/></linearGradient></defs><path d="M0 0H144L0 59z" fill="url(#gGl)"/></svg>
  <svg class="abs" style="left:140px;top:15px" width="144" height="91" viewBox="0 0 144 91"><path d="M0 88.500c8-.6 16 .4 24 0s12-.2 16 0l6.300-44 6.300 44c10 .4 20-.4 30 0s20-.8 30 0 20 .2 31.400 0" stroke="#34a4ef" stroke-width="1.700" fill="none" stroke-linejoin="round"/><path d="M40 89.500l6.300-3.800 6.300 3.800M100 89.500c3-1.500 6-1.500 9 0" stroke="#37d231" stroke-width="1.700" fill="none"/></svg>
  <svg class="abs" style="left:291px;top:52px" width="10" height="14" viewBox="0 0 10 14"><path d="M2 1.500l5.500 5.500L2 12.500" stroke="#222" stroke-width="2.400" fill="none"/></svg>
  <svg class="abs" style="left:135px;top:112px" width="11" height="12" viewBox="0 0 11 12"><path d="M5.500 .8l4.700 5.200H7.500v5H3.500V6H.8z" fill="#35a0ee" stroke="#1c6fb5" stroke-width=".8"/></svg>
  <div class="abs" style="left:148px;top:110px;font-size:12px;line-height:15px;color:#111;white-space:nowrap">0 KB/s</div>
  <svg class="abs" style="left:187px;top:112px" width="11" height="12" viewBox="0 0 11 12"><path d="M5.500 11.200L.8 6h2.700V1h4v5h2.700z" fill="#3fd62f" stroke="#1f8f15" stroke-width=".8"/></svg>
  <div class="abs" style="left:200px;top:110px;font-size:12px;line-height:15px;color:#111;white-space:nowrap">0 KB/s</div>
 </div>

 <!-- box 3: recent logs -->
 <div class="wbox" style="top:411px">
  <svg class="abs" style="left:21px;top:33px" width="14" height="9" viewBox="0 0 14 9"><path d="M1.500 7.500L7 2l5.500 5.500" stroke="#b4b8c0" stroke-width="2.200" fill="none"/></svg>
  <div class="abs" style="left:8px;top:56px;width:40px;text-align:center;font-size:11px;line-height:15px;color:#111">1/4</div>
  <svg class="abs" style="left:21px;top:82px" width="14" height="9" viewBox="0 0 14 9"><path d="M1.500 1.500L7 7l5.500-5.500" stroke="#222" stroke-width="2.400" fill="none"/></svg>
  <div class="lrow" style="top:8px;background:rgba(240,243,248,.55)"><span class="inf"></span>Access right of the shared folder [T...</div>
  <div class="lrow" style="top:32px;background:#dcdfe9"><span class="inf"></span>Shared folder [Test] was set to sho...</div>
  <div class="lrow" style="top:56px;background:#f0f2f7"><span class="inf"></span>Shared folder [Test] was created.</div>
  <div class="lrow" style="top:80px;background:#dcdfe9"><span class="inf"></span>Windows file service was started.</div>
  <div class="lrow" style="top:104px;background:#f0f2f7"><span class="inf"></span>Windows file service was stopped.</div>
 </div>

 <!-- box 4: connections -->
 <div class="wbox" style="top:591px">
  <svg class="abs" style="left:21px;top:33px" width="14" height="9" viewBox="0 0 14 9"><path d="M1.500 7.500L7 2l5.500 5.500" stroke="#b4b8c0" stroke-width="2.200" fill="none"/></svg>
  <div class="abs" style="left:8px;top:55px;width:40px;text-align:center;font-size:11px;line-height:15px;color:#111">1/1</div>
  <svg class="abs" style="left:21px;top:83px" width="14" height="9" viewBox="0 0 14 9"><path d="M1.500 1.500L7 7l5.500-5.500" stroke="#b4b8c0" stroke-width="2.200" fill="none"/></svg>
  <div class="abs" style="left:54px;top:8px;width:253px;height:121px;background:#fff"></div>
  <div class="abs" style="left:54px;top:8px;width:253px;height:24px;background:#eef0f5;font-size:11.600px;line-height:20px;color:#111;white-space:nowrap">
   <svg class="abs" style="left:7px;top:4px" width="14" height="15" viewBox="0 0 22 21"><path d="M11 .8c3 0 4.600 2.200 4.400 5.200-.2 2.400-1.100 3.600-1.700 4.400-.3 1.300.4 1.800 1.700 2.300 2.600 1 5.200 1.900 5.700 5.300.1.800-.3 1.200-1 1.200H1.900c-.7 0-1.100-.4-1-1.200.5-3.400 3.100-4.300 5.700-5.300 1.300-.5 2-1 1.700-2.300-.6-.8-1.500-2-1.700-4.400C6.400 3 8 .8 11 .8z" fill="#4c4c4c"/></svg>
   <span class="abs" style="left:24px">admin</span><span class="abs" style="left:71px">HTTP</span><span class="abs" style="left:125px">00:14:17</span>
   <svg class="abs" style="left:227px;top:5px" width="18" height="14" viewBox="0 0 18 14"><path d="M2.600 6.300L6.300 2.300l3.900 4.300-4.600 3.700z" fill="#2a2a2a"/><path d="M7 3l2.100-1.900M9.500 5.900l2.100-1.900" stroke="#555" stroke-width="1.100"/><path d="M3.900 8.100L1.500 10.400M5.800 9.600l-1.300 1.200" stroke="#141414" stroke-width="1.700"/><circle cx="14" cy="7.900" r="2.500" fill="#ffdfe1" stroke="#c44a55" stroke-width="1.100"/><path d="M12.400 6.300l3.200 3.200" stroke="#c44a55" stroke-width="1.100"/></svg>
  </div>
 </div>

 <!-- watermark -->
 <svg class="abs" style="left:50px;top:688px" width="80" height="72" viewBox="1630 890 80 72"><defs><linearGradient id="gWm" x1="0" y1="0" x2="1" y2="1"><stop offset="0" stop-color="#c9d6f2"/><stop offset="1" stop-color="#7f97d6"/></linearGradient></defs>
  <g opacity=".86"><path d="M1653 897L1697.500 905 1685 949 1638 934z" fill="url(#gWm)" stroke="url(#gWm)" stroke-width="5" stroke-linejoin="round"/></g>
  <path d="M1657 912L1681 936M1683 913L1655 934" stroke="#f3f6fd" stroke-opacity=".92" stroke-width="4.600" stroke-linecap="round"/>
 </svg>
 <div class="abs" style="left:123px;top:708px;font-family:'Liberation Sans',sans-serif;font-size:25px;line-height:30px;color:rgba(125,140,190,.62);white-space:nowrap;transform:scaleX(.775);transform-origin:0 0;letter-spacing:-.2px">xtremehardware.com</div>
 <!-- bottom-right tab -->
 <svg class="abs" style="left:260px;top:733px" width="80" height="24" viewBox="0 0 80 24"><path d="M0 24C14 24 18 2.500 32 2.500H80V24z" fill="#f1f5fa" stroke="#fff" stroke-width="1"/><path d="M46 10l6 5.500 6-5.500" stroke="#222" stroke-width="2.400" fill="none"/></svg>
</div>

<!--/WIDGETS-->
<!--FOOTER-->
<div class="abs" id="synologo" style="left:873px;top:906px;height:32px;white-space:nowrap;color:#fff;font-family:'Liberation Sans',sans-serif;font-size:21.800px;line-height:32px;letter-spacing:-1.300px;text-shadow:0 1px 2px rgba(20,50,100,.5)"><b>Syno</b><span style="font-family:'Liberation Serif',serif;font-size:24.500px;letter-spacing:-1px">logy</span></div>
<div class="abs" id="dsmver" style="left:969px;top:908px;height:32px;white-space:nowrap;color:#ccd6e3;font-family:'Liberation Sans',sans-serif;font-size:19.800px;line-height:32px;text-shadow:1px 1px 1px rgba(40,55,85,.85),0 0 1px rgba(200,210,225,.9)">DSM 4.1</div>
<!--/FOOTER-->
<div class="abs" style="left:0;top:958px;width:1920px;height:1px;background:rgba(40,60,100,.55)"></div>
</body>
</html>
